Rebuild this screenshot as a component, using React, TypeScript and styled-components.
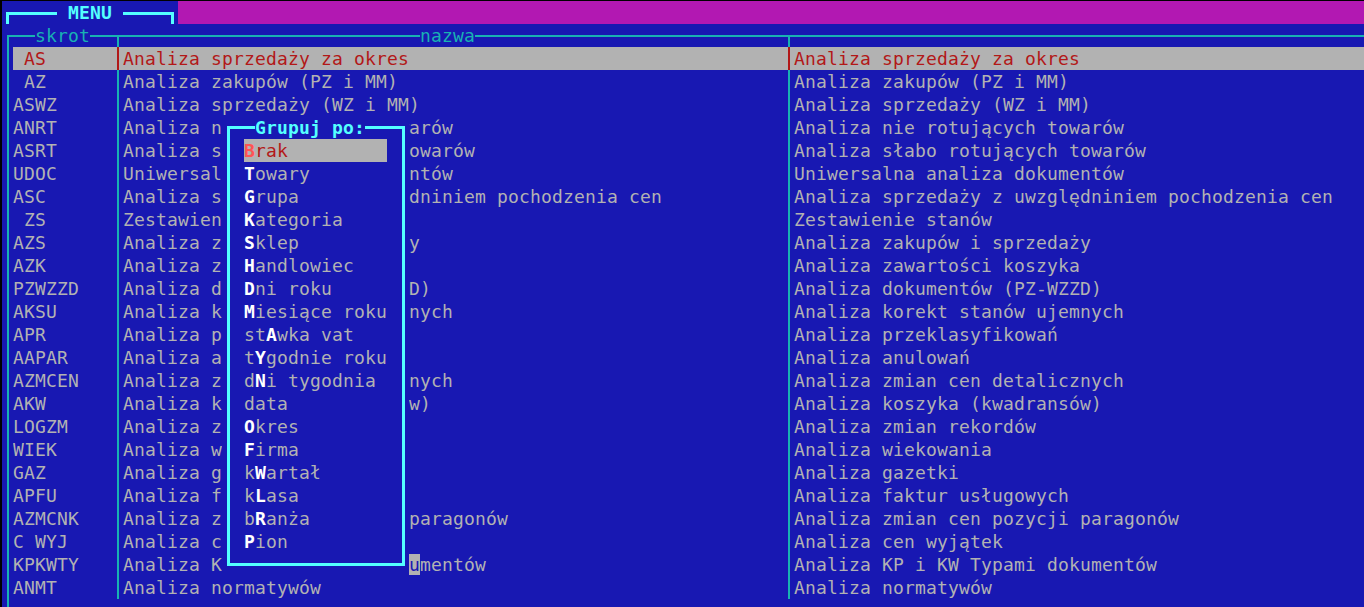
import styled, { createGlobalStyle, css } from "styled-components";

const BLUE = "#1818b2";
const MAGENTA = "#b218b2";
const GREY = "#b2b2b2";
const RED = "#b21818";
const LRED = "#ff5454";
const CYAN = "#18b2b2";
const LCYAN = "#54ffff";
const CELL = 11;
const ROW = 23;

type Entry = { code: string; name: string; cursor?: number };

const entries: Entry[] = [
  { code: " AS", name: "Analiza sprzedaży za okres" },
  { code: " AZ", name: "Analiza zakupów (PZ i MM)" },
  { code: "ASWZ", name: "Analiza sprzedaży (WZ i MM)" },
  { code: "ANRT", name: "Analiza nie rotujących towarów" },
  { code: "ASRT", name: "Analiza słabo rotujących towarów" },
  { code: "UDOC", name: "Uniwersalna analiza dokumentów" },
  { code: "ASC", name: "Analiza sprzedaży z uwzględniniem pochodzenia cen" },
  { code: " ZS", name: "Zestawienie stanów" },
  { code: "AZS", name: "Analiza zakupów i sprzedaży" },
  { code: "AZK", name: "Analiza zawartości koszyka" },
  { code: "PZWZZD", name: "Analiza dokumentów (PZ-WZZD)" },
  { code: "AKSU", name: "Analiza korekt stanów ujemnych" },
  { code: "APR", name: "Analiza przeklasyfikowań" },
  { code: "AAPAR", name: "Analiza anulowań" },
  { code: "AZMCEN", name: "Analiza zmian cen detalicznych" },
  { code: "AKW", name: "Analiza koszyka (kwadransów)" },
  { code: "LOGZM", name: "Analiza zmian rekordów" },
  { code: "WIEK", name: "Analiza wiekowania" },
  { code: "GAZ", name: "Analiza gazetki" },
  { code: "APFU", name: "Analiza faktur usługowych" },
  { code: "AZMCNK", name: "Analiza zmian cen pozycji paragonów" },
  { code: "C WYJ", name: "Analiza cen wyjątek" },
  { code: "KPKWTY", name: "Analiza KP i KW Typami dokumentów", cursor: 26 },
  { code: "ANMT", name: "Analiza normatywów" },
];

// [before, hotkey, after]
const groups: [string, string, string][] = [
  ["", "B", "rak"],
  ["", "T", "owary"],
  ["", "G", "rupa"],
  ["", "K", "ategoria"],
  ["", "S", "klep"],
  ["", "H", "andlowiec"],
  ["", "D", "ni roku"],
  ["", "M", "iesiące roku"],
  ["st", "A", "wka vat"],
  ["t", "Y", "godnie roku"],
  ["d", "N", "i tygodnia"],
  ["data", "", ""],
  ["", "O", "kres"],
  ["", "F", "irma"],
  ["k", "W", "artał"],
  ["k", "L", "asa"],
  ["b", "R", "anża"],
  ["", "P", "ion"],
];

const GlobalStyle = createGlobalStyle`
  html, body {
    margin: 0;
    padding: 0;
    background: #000;
    overflow: hidden;
  }
  body {
    font-family: "DejaVu Sans Mono", "Liberation Mono", monospace;
    font-size: 18px;
    letter-spacing: 0.163px;
  }
`;

const Screen = styled.div`
  width: 1364px;
  height: 607px;
  box-sizing: border-box;
  padding: 1px 0 0 2px;
  background: #000;
`;

const Terminal = styled.div`
  position: relative;
  height: 606px;
  background: ${BLUE};
  overflow: hidden;
  display: flex;
  flex-direction: column;
`;

const TopBar = styled.div`
  display: flex;
  height: ${ROW}px;
  flex-shrink: 0;
`;

const MenuTab = styled.div`
  width: ${16 * CELL}px;
  background: ${BLUE};
`;

const MenuFrame = styled.div`
  position: relative;
  margin: 11px 0 0 4px;
  width: 168px;
  height: 12px;
  box-sizing: border-box;
  border: 3px solid ${LCYAN};
  border-bottom: none;
`;

const MenuLabel = styled.span`
  position: absolute;
  left: 48px;
  top: -14px;
  height: ${ROW}px;
  line-height: ${ROW}px;
  padding: 0 ${CELL}px;
  background: ${BLUE};
  color: ${LCYAN};
  font-weight: bold;
  white-space: pre;
`;

const MagentaFill = styled.div`
  flex: 1;
  background: ${MAGENTA};
`;

const Grid = styled.div<{ $hl?: boolean }>`
  display: grid;
  grid-template-columns: ${CELL}px ${9 * CELL}px ${CELL}px ${60 * CELL}px ${CELL}px 1fr;
  height: ${ROW}px;
  line-height: ${ROW}px;
  flex-shrink: 0;
`;

type LineKind = "v" | "corner" | "tee";

const Line = styled.div<{ $kind: LineKind; $color?: string; $bg?: string }>`
  position: relative;
  background: ${(p) => p.$bg ?? "transparent"};
  &::before {
    content: "";
    position: absolute;
    left: 5px;
    width: 2px;
    top: ${(p) => (p.$kind === "v" ? 0 : 11)}px;
    bottom: 0;
    background: ${(p) => p.$color ?? CYAN};
  }
  ${(p) =>
    p.$kind !== "v" &&
    css`
      &::after {
        content: "";
        position: absolute;
        top: 11px;
        height: 2px;
        left: ${p.$kind === "corner" ? 5 : 0}px;
        right: 0;
        background: ${CYAN};
      }
    `}
`;

const HeadSpan = styled.div`
  position: relative;
  white-space: pre;
  &::after {
    content: "";
    position: absolute;
    top: 11px;
    height: 2px;
    left: 0;
    right: 0;
    background: ${CYAN};
  }
`;

const HeadLabel = styled.span<{ $at: number }>`
  position: relative;
  z-index: 1;
  margin-left: ${(p) => p.$at * CELL}px;
  background: ${BLUE};
  color: ${CYAN};
`;

const TextCell = styled.div<{ $hl?: boolean }>`
  white-space: pre;
  overflow: hidden;
  color: ${(p) => (p.$hl ? RED : GREY)};
  background: ${(p) => (p.$hl ? GREY : "transparent")};
`;

const Cursor = styled.span`
  background: ${GREY};
  color: ${BLUE};
`;

const Tail = styled.div`
  display: grid;
  grid-template-columns: ${CELL}px 1fr;
  flex: 1;
`;

const Popup = styled.div`
  position: absolute;
  left: ${20 * CELL}px;
  top: ${5 * ROW}px;
  width: ${17 * CELL}px;
  height: ${20 * ROW}px;
  background: ${BLUE};
  z-index: 2;
`;

const PopupFrame = styled.div`
  position: relative;
  margin: 10px 0 0 5px;
  width: 178px;
  height: 440px;
  box-sizing: border-box;
  border: 3px solid ${LCYAN};
  padding: 10px 0 0 14px;
`;

const PopupTitle = styled.span`
  position: absolute;
  left: 25px;
  top: -13px;
  height: ${ROW}px;
  line-height: ${ROW}px;
  background: ${BLUE};
  color: ${LCYAN};
  font-weight: bold;
  white-space: pre;
`;

const Item = styled.div<{ $hl?: boolean }>`
  width: ${13 * CELL}px;
  height: ${ROW}px;
  line-height: ${ROW}px;
  white-space: pre;
  color: ${(p) => (p.$hl ? RED : GREY)};
  background: ${(p) => (p.$hl ? GREY : "transparent")};
`;

const Hot = styled.b<{ $hl?: boolean }>`
  color: ${(p) => (p.$hl ? LRED : "#ffffff")};
`;

function EntryRow({ entry, hl }: { entry: Entry; hl: boolean }) {
  const sepColor = hl ? RED : CYAN;
  const sepBg = hl ? GREY : undefined;
  const name =
    entry.cursor !== undefined ? (
      <>
        {entry.name.slice(0, entry.cursor)}
        <Cursor>{entry.name[entry.cursor]}</Cursor>
        {entry.name.slice(entry.cursor + 1)}
      </>
    ) : (
      entry.name
    );
  return (
    <Grid>
      <Line $kind="v" />
      <TextCell $hl={hl}>{entry.code}</TextCell>
      <Line $kind="v" $color={sepColor} $bg={sepBg} />
      <TextCell $hl={hl}>{name}</TextCell>
      <Line $kind="v" $color={sepColor} $bg={sepBg} />
      <TextCell $hl={hl}>{entry.name}</TextCell>
    </Grid>
  );
}

export default function App() {
  return (
    <Screen>
      <GlobalStyle />
      <Terminal>
        <TopBar>
          <MenuTab>
            <MenuFrame>
              <MenuLabel>MENU</MenuLabel>
            </MenuFrame>
          </MenuTab>
          <MagentaFill />
        </TopBar>

        <Grid>
          <Line $kind="corner" />
          <HeadSpan>
            <HeadLabel $at={2}>skrot</HeadLabel>
          </HeadSpan>
          <Line $kind="tee" />
          <HeadSpan>
            <HeadLabel $at={27}>nazwa</HeadLabel>
          </HeadSpan>
          <Line $kind="tee" />
          <HeadSpan />
        </Grid>

        {entries.map((e, i) => (
          <EntryRow key={e.code} entry={e} hl={i === 0} />
        ))}

        <Tail>
          <Line $kind="v" />
        </Tail>

        <Popup>
          <PopupFrame>
            <PopupTitle>Grupuj po:</PopupTitle>
            {groups.map(([a, k, b], i) => (
              <Item key={i} $hl={i === 0}>
                {a}
                {k && <Hot $hl={i === 0}>{k}</Hot>}
                {b}
              </Item>
            ))}
          </PopupFrame>
        </Popup>
      </Terminal>
    </Screen>
  );
}
